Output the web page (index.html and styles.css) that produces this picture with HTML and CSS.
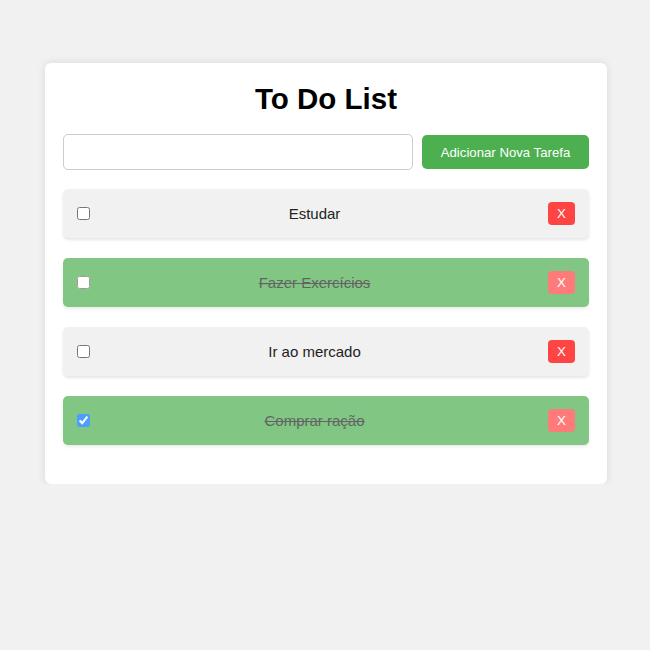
FILE: index.html
```html
<!DOCTYPE html>
<html lang="pt">
<head>
<meta charset="utf-8">
<title>To Do List</title>
<link rel="stylesheet" href="styles.css">
</head>
<body>
<div class="card">
  <h1 class="title">To Do List</h1>
  <div class="add-row">
    <input class="task-input" type="text">
    <button class="add-btn">Adicionar Nova Tarefa</button>
  </div>
  <ul class="list">
    <li class="item">
      <input type="checkbox" class="check">
      <span class="text">Estudar</span>
      <button class="del">X</button>
    </li>
    <li class="item done">
      <input type="checkbox" class="check">
      <span class="text">Fazer Exercícios</span>
      <button class="del">X</button>
    </li>
    <li class="item">
      <input type="checkbox" class="check">
      <span class="text">Ir ao mercado</span>
      <button class="del">X</button>
    </li>
    <li class="item done">
      <input type="checkbox" class="check" checked>
      <span class="text">Comprar ração</span>
      <button class="del">X</button>
    </li>
  </ul>
</div>
</body>
</html>
```
FILE: styles.css
```css
html, body {
  margin: 0;
  padding: 0;
  background: #f1f1f1;
  font-family: "Liberation Sans", Arial, sans-serif;
}
body {
  padding-top: 63px;
}
.card {
  box-sizing: border-box;
  width: 562px;
  margin-left: 45px;
  background: #fff;
  border-radius: 6px;
  box-shadow: 0 0 8px rgba(0, 0, 0, 0.1);
  padding: 19px 18px 19px;
}
.title {
  margin: 0 0 19px;
  font-size: 29.5px;
  line-height: 33px;
  text-align: center;
  color: #000;
  font-weight: bold;
}
.add-row {
  display: flex;
  align-items: center;
  gap: 9px;
  margin-bottom: 19px;
}
.task-input {
  flex: 1;
  box-sizing: border-box;
  height: 36px;
  border: 1px solid #ccc;
  border-radius: 5px;
  padding: 0 10px;
  font-family: inherit;
  font-size: 14px;
  margin: 0;
}
.add-btn {
  box-sizing: border-box;
  width: 167px;
  height: 34px;
  padding: 0;
  border: none;
  border-radius: 5px;
  background: #4caf50;
  color: #fff;
  font-family: inherit;
  font-size: 13.2px;
  margin: 0;
}
.list {
  list-style: none;
  margin: 0;
  padding: 0;
}
.item {
  display: flex;
  align-items: center;
  box-sizing: border-box;
  height: 49px;
  padding: 0 14px 0 10px;
  margin-bottom: 20px;
  background: #f1f1f1;
  border-radius: 5px;
  box-shadow: 0 2px 3px rgba(0, 0, 0, 0.1);
}
.check {
  margin: 3px 3px 3px 4px;
  width: 13px;
  height: 13px;
}
.text {
  flex: 1;
  text-align: center;
  font-size: 15px;
  color: #222;
}
.del {
  margin-left: 12px;
  box-sizing: border-box;
  width: 27px;
  height: 23px;
  padding: 0;
  border: none;
  border-radius: 4px;
  background: #ff4444;
  color: #fff;
  font-family: inherit;
  font-size: 13.333px;
}
.item.done {
  background: #4caf50;
  opacity: 0.7;
}
.item.done .text {
  text-decoration: line-through;
}
```
